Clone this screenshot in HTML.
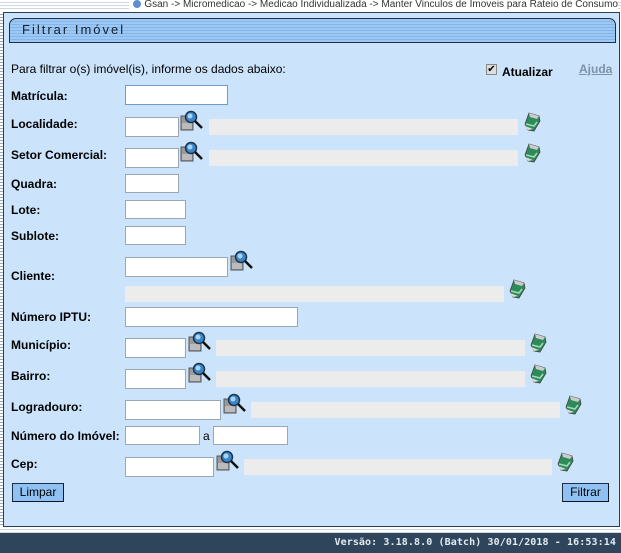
<!DOCTYPE html>
<html><head><meta charset="utf-8"><style>
body{margin:0;width:621px;height:553px;position:relative;overflow:hidden;background:#fff;font-family:"Liberation Sans",sans-serif;}
.a{position:absolute}
.top{left:0;top:0;width:621px;height:11px;background:repeating-linear-gradient(#fff 0,#fff 2px,#cfd8e2 2px,#cfd8e2 3px);}
.bc{right:3px;top:0;font-size:10px;color:#333;background:#fff;padding-left:4px;line-height:10px;white-space:nowrap}
.panel{left:3px;top:12px;width:615px;height:513px;background:#cbe4fc;border:1px solid #2c3e55}
.tb{left:9px;top:18px;width:605px;height:23px;border:1px solid #1f2f45;border-radius:7px 7px 0 0;background:repeating-linear-gradient(#9cc8f3 0,#9cc8f3 2px,#84b6ea 2px,#84b6ea 3px);}
.tt{left:22px;top:22px;font-size:13px;letter-spacing:2px;color:#14202f}
.t{font-size:12px;color:#000;white-space:nowrap}
.l{font-size:12px;font-weight:bold;color:#000;left:11px;white-space:nowrap}
.in{background:#fff;border:1px solid #9aa6b2;box-sizing:border-box}
.bar{background:#ececec}
.btn{background:#8fc2f2;border:1px solid #1e2e44;border-right-color:#0c1626;border-bottom-color:#0c1626;font-size:12px;text-align:center;line-height:17px;box-sizing:border-box}
.foot{left:0;top:533px;width:621px;height:20px;background:#2f455c;color:#e3ebf3;font-family:"DejaVu Sans Mono",monospace;font-weight:bold;font-size:10px;text-align:right;line-height:20px;letter-spacing:0.1px}
</style></head><body>
<div class="a top"></div>
<div class="a bc"><span style="display:inline-block;width:8px;height:8px;border-radius:50%;background:#5b8fd0;vertical-align:-1px;margin-right:3px"></span>Gsan -&gt; Micromedicao -&gt; Medicao Individualizada -&gt; Manter Vinculos de Imoveis para Rateio de Consumo</div>
<div class="a panel"></div>
<div class="a" style="left:0;top:12px;width:3px;height:515px;background:repeating-linear-gradient(#fff 0,#fff 2px,#9aaabb 2px,#9aaabb 3px)"></div>
<div class="a tb"></div>
<div class="a tt">Filtrar Imóvel</div>
<div class="a t" style="left:11px;top:62px">Para filtrar o(s) imóvel(is), informe os dados abaixo:</div>
<div class="a" style="left:486px;top:64px;width:11px;height:11px;background:#ddd;border:1px solid #888;box-sizing:border-box;font-size:10px;line-height:10px;text-align:center">✔</div>
<div class="a l" style="left:502px;top:65px">Atualizar</div>
<div class="a t" style="left:579px;top:62px;color:#7d91a8;font-weight:bold;text-decoration:underline">Ajuda</div>

<div class="a l" style="top:89px">Matrícula:</div>
<div class="a in" style="left:125px;top:85px;width:103px;height:20px;border-color:#6b9ad6"></div>

<div class="a l" style="top:117px">Localidade:</div>
<div class="a in" style="left:125px;top:117px;width:54px;height:20px"></div>
<div class="a bar" style="left:209px;top:119px;width:309px;height:16px"></div>

<div class="a l" style="top:148px">Setor Comercial:</div>
<div class="a in" style="left:125px;top:148px;width:54px;height:20px"></div>
<div class="a bar" style="left:209px;top:150px;width:309px;height:16px"></div>

<div class="a l" style="top:177px">Quadra:</div>
<div class="a in" style="left:125px;top:174px;width:54px;height:19px"></div>
<div class="a l" style="top:203px">Lote:</div>
<div class="a in" style="left:125px;top:200px;width:61px;height:19px"></div>
<div class="a l" style="top:229px">Sublote:</div>
<div class="a in" style="left:125px;top:226px;width:61px;height:19px"></div>

<div class="a l" style="top:269px">Cliente:</div>
<div class="a in" style="left:125px;top:257px;width:103px;height:20px"></div>
<div class="a bar" style="left:125px;top:286px;width:379px;height:16px"></div>

<div class="a l" style="top:310px">Número IPTU:</div>
<div class="a in" style="left:125px;top:307px;width:173px;height:20px"></div>

<div class="a l" style="top:338px">Município:</div>
<div class="a in" style="left:125px;top:338px;width:61px;height:20px"></div>
<div class="a bar" style="left:216px;top:340px;width:309px;height:16px"></div>

<div class="a l" style="top:369px">Bairro:</div>
<div class="a in" style="left:125px;top:369px;width:61px;height:20px"></div>
<div class="a bar" style="left:216px;top:371px;width:309px;height:16px"></div>

<div class="a l" style="top:400px">Logradouro:</div>
<div class="a in" style="left:125px;top:400px;width:96px;height:20px"></div>
<div class="a bar" style="left:251px;top:402px;width:309px;height:16px"></div>

<div class="a l" style="top:429px">Número do Imóvel:</div>
<div class="a in" style="left:125px;top:426px;width:75px;height:19px"></div>
<div class="a t" style="left:203px;top:429px">a</div>
<div class="a in" style="left:213px;top:426px;width:75px;height:19px"></div>

<div class="a l" style="top:457px">Cep:</div>
<div class="a in" style="left:125px;top:457px;width:89px;height:20px"></div>
<div class="a bar" style="left:244px;top:459px;width:308px;height:16px"></div>

<div class="a btn" style="left:12px;top:483px;width:52px;height:19px">Limpar</div>
<div class="a btn" style="left:562px;top:483px;width:47px;height:19px">Filtrar</div>

<div class="a" style="left:0;top:527px;width:621px;height:6px;background:repeating-linear-gradient(#fff 0,#fff 2px,#cfd8e2 2px,#cfd8e2 3px)"></div>
<div class="a foot"><span style="margin-right:5px">Versão: 3.18.8.0 (Batch) 30/01/2018 - 16:53:14</span></div>

<svg class="a" style="left:0;top:0" width="621" height="553">
<defs>
<g id="lupa">
<rect x="0" y="5" width="12" height="14" fill="#9a9a9a" stroke="#555"/>
<rect x="1" y="12" width="10" height="6" fill="#bbb"/>
<circle cx="10" cy="6" r="5.5" fill="#3d86c6" stroke="#1b3552" stroke-width="1.5"/>
<circle cx="9" cy="5" r="2.5" fill="#a8d4f5"/>
<line x1="14" y1="10" x2="21" y2="17" stroke="#111" stroke-width="2.5"/>
</g>
<g id="er">
<path d="M5 1 L15 4 L16 9 L10 19 L4 18 L1 12 Z" fill="#2f8a5a" stroke="#444" stroke-width="0.8"/>
<path d="M2 12 L10 14 L13 10" fill="none" stroke="#9fdcb7" stroke-width="1.5"/>
<path d="M1 14 L9 17 L4 18 Z" fill="#ddd"/>
<path d="M5 1 L15 4 L13 7 L6 5 Z" fill="#ccc"/>
</g>
</defs>
<use href="#lupa" x="181" y="111"/><use href="#er" x="524" y="112"/>
<use href="#lupa" x="181" y="142"/><use href="#er" x="524" y="143"/>
<use href="#lupa" x="231" y="251"/><use href="#er" x="509" y="279"/>
<use href="#lupa" x="189" y="332"/><use href="#er" x="530" y="333"/>
<use href="#lupa" x="189" y="363"/><use href="#er" x="530" y="364"/>
<use href="#lupa" x="224" y="394"/><use href="#er" x="565" y="395"/>
<use href="#lupa" x="217" y="451"/><use href="#er" x="557" y="452"/>
</svg>
</body></html>
